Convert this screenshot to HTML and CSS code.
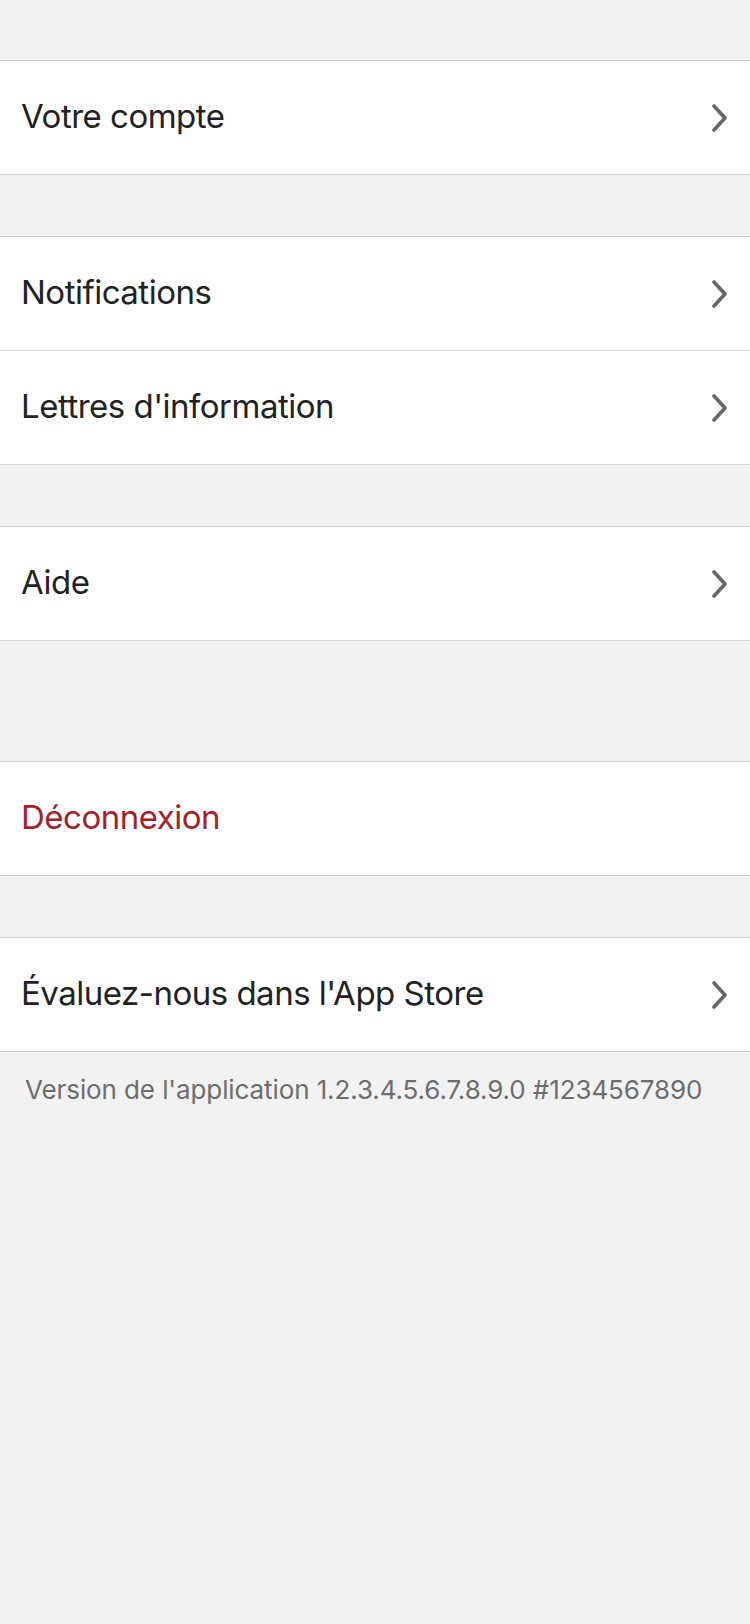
FILE: index.html
```html
<!DOCTYPE html>
<html lang="fr">
<head>
<meta charset="utf-8">
<title>Réglages</title>
<link rel="stylesheet" href="styles.css">
</head>
<body>
<main class="settings">
  <section class="group group-first">
    <a class="row" href="#"><span class="label">Votre compte</span><svg class="chev" viewBox="0 0 16 28"><path d="M2 2 L13 14 L2 26"/></svg></a>
  </section>
  <section class="group">
    <a class="row" href="#"><span class="label">Notifications</span><svg class="chev" viewBox="0 0 16 28"><path d="M2 2 L13 14 L2 26"/></svg></a>
    <a class="row" href="#"><span class="label">Lettres d'information</span><svg class="chev" viewBox="0 0 16 28"><path d="M2 2 L13 14 L2 26"/></svg></a>
  </section>
  <section class="group">
    <a class="row" href="#"><span class="label">Aide</span><svg class="chev" viewBox="0 0 16 28"><path d="M2 2 L13 14 L2 26"/></svg></a>
  </section>
  <section class="group group-wide">
    <a class="row" href="#"><span class="label label-danger">Déconnexion</span></a>
  </section>
  <section class="group">
    <a class="row" href="#"><span class="label">Évaluez-nous dans l'App Store</span><svg class="chev" viewBox="0 0 16 28"><path d="M2 2 L13 14 L2 26"/></svg></a>
  </section>
  <p class="version">Version de l'application 1.2.3.4.5.6.7.8.9.0 #1234567890</p>
</main>
</body>
</html>
```
FILE: styles.css
```css
html, body {
  margin: 0;
  padding: 0;
  background: #f2f2f2;
}
body {
  width: 750px;
  min-height: 1624px;
  font-family: Inter, "Noto Sans", "Liberation Sans", sans-serif;
}
.settings {
  display: flex;
  flex-direction: column;
}
.group {
  display: flex;
  flex-direction: column;
  background: #ffffff;
  border-top: 1px solid #d3d3d3;
  border-bottom: 1px solid #d3d3d3;
  margin-top: 61px;
}
.group-first {
  margin-top: 60px;
}
.group-wide {
  margin-top: 120px;
}
.row {
  display: flex;
  align-items: center;
  justify-content: space-between;
  height: 113px;
  padding: 0 22px 3px 21px;
  text-decoration: none;
  box-sizing: border-box;
}
.row + .row {
  border-top: 1px solid #d3d3d3;
  height: 114px;
}
.label {
  font-size: 33px;
  color: #222222;
  letter-spacing: -0.5px;
}
.label-danger {
  color: #a4202a;
}
.chev {
  width: 16px;
  height: 28px;
  fill: none;
  stroke: #666666;
  stroke-width: 3.6;
  stroke-linecap: round;
  stroke-linejoin: round;
  margin-top: 3px;
}
.version {
  margin: 0;
  padding: 22px 20px 0 25px;
  font-size: 26px;
  line-height: 32px;
  color: #6d6d6d;
  letter-spacing: -0.1px;
}
```
